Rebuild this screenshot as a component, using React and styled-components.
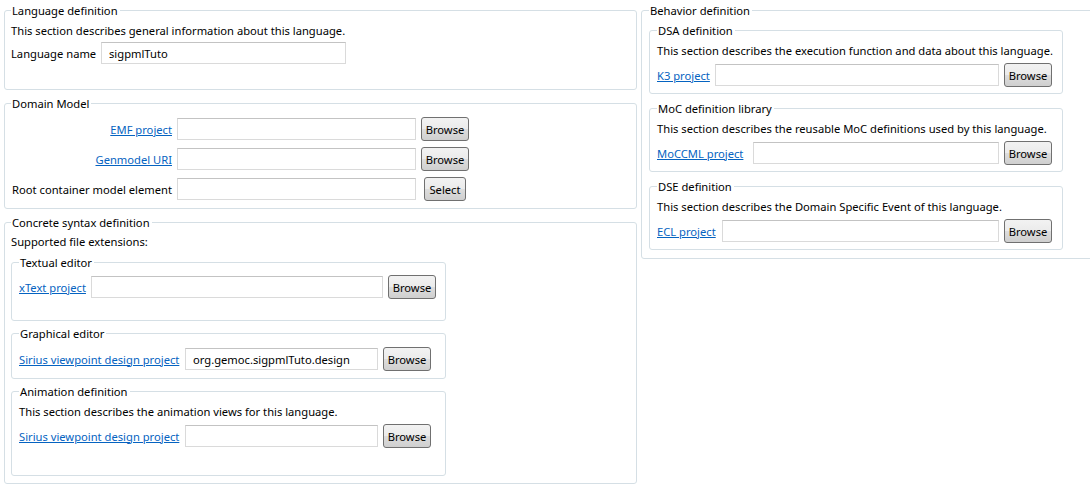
import React from 'react';
import styled, { createGlobalStyle } from 'styled-components';

const GlobalStyle = createGlobalStyle`
  html, body {
    margin: 0;
    padding: 0;
    background: #fff;
    overflow: hidden;
  }
  body {
    font-family: "Noto Sans", "Open Sans", sans-serif;
    font-size: 11.2px;
    color: #000;
  }
`;

const Page = styled.div`
  display: flex;
  align-items: flex-start;
  gap: 4px;
  padding: 3px 0 0 4px;
  width: 1200px;
`;

const Column = styled.div`
  display: flex;
  flex-direction: column;
  gap: ${(p) => p.$gap || 6}px;
  width: ${(p) => p.$w}px;
`;

const Group = styled.fieldset`
  margin: 0;
  border: 1px solid #d5dfe5;
  border-radius: 3px;
  padding: ${(p) => p.$pt ?? 4}px 7px ${(p) => p.$pb ?? 8}px ${(p) => p.$pl ?? 7}px;
  min-width: 0;
  display: flex;
  flex-direction: column;
  gap: ${(p) => p.$gap ?? 6}px;
  width: ${(p) => (p.$w ? `${p.$w}px` : 'auto')};
  box-sizing: border-box;
`;

const Legend = styled.legend`
  padding: 0 2px 0 1px;
  margin-left: 0;
  line-height: 15px;
`;

const Text = styled.div`
  line-height: 16px;
  white-space: nowrap;
`;

const Row = styled.div`
  display: flex;
  align-items: center;
  gap: ${(p) => p.$gap ?? 5}px;
`;

const Label = styled.span`
  white-space: nowrap;
  width: ${(p) => (p.$w ? `${p.$w}px` : 'auto')};
  text-align: ${(p) => (p.$right ? 'right' : 'left')};
  flex: none;
`;

const LinkLabel = styled(Label)`
  color: #0563c1;
  text-decoration: underline;
  cursor: pointer;
`;

const Field = styled.input`
  box-sizing: border-box;
  width: ${(p) => p.$w}px;
  height: 22px;
  margin: 0;
  padding: 0 7px;
  border: 1px solid #dadada;
  border-top-color: #c3c3c3;
  font: inherit;
  color: #000;
  background: #fff;
  outline: none;
  flex: none;
`;

const ButtonSlot = styled.div`
  width: 48px;
  display: flex;
  justify-content: center;
  flex: none;
`;

const Button = styled.button`
  box-sizing: border-box;
  width: ${(p) => p.$w || 48}px;
  height: 24px;
  padding: 0;
  margin: 0;
  border: 1px solid #707070;
  border-radius: 3px;
  background: linear-gradient(#f2f2f2 0%, #ebebeb 50%, #dddddd 51%, #cfcfcf 100%);
  font: inherit;
  color: #000;
  flex: none;
`;

const App = () => (
  <>
    <GlobalStyle />
    <Page>
      <Column $w={633} $gap={6}>
        <Group $pl={6} $pt={5} $pb={25} $gap={3}>
          <Legend>Language definition</Legend>
          <Text>This section describes general information about this language.</Text>
          <Row>
            <Label $w={85}>Language name</Label>
            <Field $w={245} defaultValue="sigpmlTuto" />
          </Row>
        </Group>

        <Group $pl={6} $pt={6} $pb={7} $gap={6}>
          <Legend>Domain Model</Legend>
          <Row>
            <LinkLabel $w={161} $right>EMF project</LinkLabel>
            <Field $w={239} />
            <ButtonSlot><Button>Browse</Button></ButtonSlot>
          </Row>
          <Row>
            <LinkLabel $w={161} $right>Genmodel URI</LinkLabel>
            <Field $w={239} />
            <ButtonSlot><Button>Browse</Button></ButtonSlot>
          </Row>
          <Row>
            <Label $w={161} $right>Root container model element</Label>
            <Field $w={239} />
            <ButtonSlot><Button $w={42}>Select</Button></ButtonSlot>
          </Row>
        </Group>

        <Group $pl={6} $pt={4} $pb={7} $gap={5}>
          <Legend>Concrete syntax definition</Legend>
          <Text>Supported file extensions:</Text>
          <Group $w={435} $pt={5} $pb={21} $gap={6}>
            <Legend>Textual editor</Legend>
            <Row>
              <LinkLabel $w={67}>xText project</LinkLabel>
              <Field $w={292} />
              <Button>Browse</Button>
            </Row>
          </Group>
          <Group $w={435} $pt={6} $pb={7} $gap={6}>
            <Legend>Graphical editor</Legend>
            <Row>
              <LinkLabel $w={161}>Sirius viewpoint design project</LinkLabel>
              <Field $w={193} defaultValue="org.gemoc.sigpmlTuto.design" />
              <Button>Browse</Button>
            </Row>
          </Group>
          <Group $w={435} $pt={5} $pb={27} $gap={4}>
            <Legend>Animation definition</Legend>
            <Text>This section describes the animation views for this language.</Text>
            <Row>
              <LinkLabel $w={161}>Sirius viewpoint design project</LinkLabel>
              <Field $w={193} />
              <Button>Browse</Button>
            </Row>
          </Group>
        </Group>
      </Column>

      <Column $w={520}>
        <Group $pt={5} $pb={8} $gap={7}>
          <Legend>Behavior definition</Legend>
          <Group $w={414} $pt={5} $pb={6} $gap={4}>
            <Legend>DSA definition</Legend>
            <Text>This section describes the execution function and data about this language.</Text>
            <Row>
              <LinkLabel $w={53}>K3 project</LinkLabel>
              <Field $w={284} />
              <Button>Browse</Button>
            </Row>
          </Group>
          <Group $w={414} $pt={5} $pb={6} $gap={4}>
            <Legend>MoC definition library</Legend>
            <Text>This section describes the reusable MoC definitions used by this language.</Text>
            <Row>
              <LinkLabel $w={91}>MoCCML project</LinkLabel>
              <Field $w={246} />
              <Button>Browse</Button>
            </Row>
          </Group>
          <Group $w={414} $pt={5} $pb={6} $gap={4}>
            <Legend>DSE definition</Legend>
            <Text>This section describes the Domain Specific Event of this language.</Text>
            <Row>
              <LinkLabel $w={60}>ECL project</LinkLabel>
              <Field $w={277} />
              <Button>Browse</Button>
            </Row>
          </Group>
        </Group>
      </Column>
    </Page>
  </>
);

export default App;
